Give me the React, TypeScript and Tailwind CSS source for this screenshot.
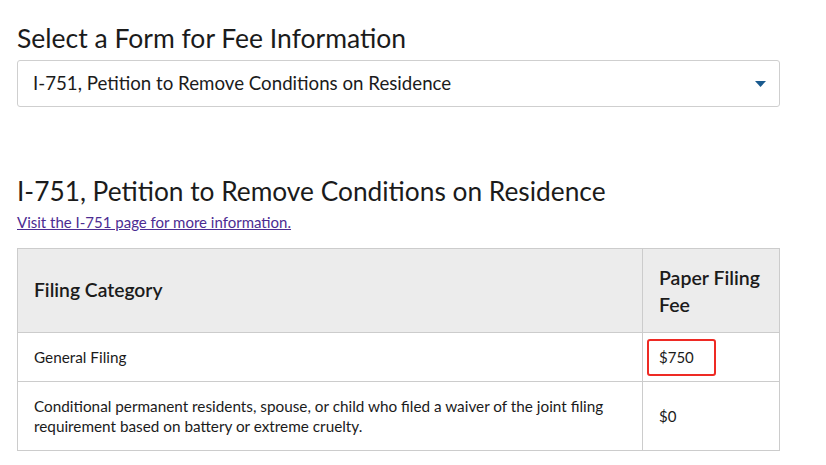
const font = { fontFamily: '"Lato", "Liberation Sans", sans-serif' };

const rows = [
  { category: "General Filing", fee: "$750", highlight: true },
  {
    category:
      "Conditional permanent residents, spouse, or child who filed a waiver of the joint filing requirement based on battery or extreme cruelty.",
    fee: "$0",
    highlight: false,
  },
];

function ChevronDown() {
  return (
    <svg width="11" height="6" viewBox="0 0 11 6" className="shrink-0">
      <path d="M0 0h11L5.5 6z" fill="#1a5b8f" />
    </svg>
  );
}

export default function App() {
  return (
    <div className="min-h-screen bg-white text-[#1b1b1b] pl-[17px] pt-[21px]" style={font}>
      <div className="w-[763px]">
        {/* Form picker */}
        <h2 className="text-[26.5px] leading-[34px] font-normal">Select a Form for Fee Information</h2>
        <div className="mt-[5px] h-[47px] flex items-center justify-between border border-[#cfcfcf] rounded-[3px] pl-[15px] pr-[13px]">
          <span className="text-[18.7px]">I-751, Petition to Remove Conditions on Residence</span>
          <ChevronDown />
        </div>

        {/* Selected form */}
        <h1 className="mt-[67px] text-[26.3px] leading-[34px] font-normal">
          I-751, Petition to Remove Conditions on Residence
        </h1>
        <a href="#" className="block mt-[4px] text-[15px] leading-[20px] text-[#4c2c92] underline">
          Visit the I-751 page for more information.
        </a>

        <table className="mt-[16px] w-full border-collapse border border-[#cccccc]">
          <thead>
            <tr className="bg-[#ececec] h-[84px]">
              <th className="text-left font-semibold text-[19.3px] pl-[16px] border border-[#cccccc] w-[625px]">
                Filing Category
              </th>
              <th className="text-left font-semibold text-[19.5px] leading-[27px] pl-[16px] pr-[10px] border border-[#cccccc]">
                Paper Filing Fee
              </th>
            </tr>
          </thead>
          <tbody>
            {rows.map((row) => (
              <tr key={row.fee} className={row.highlight ? "h-[49px]" : "h-[69px]"}>
                <td className="pl-[16px] pr-[24px] text-[15.3px] leading-[20px] border border-[#cccccc]">
                  {row.category}
                </td>
                <td className="text-[15px] leading-[20px] border border-[#cccccc] pl-[4px]">
                  {row.highlight ? (
                    <span className="inline-block w-[69px] h-[37px] border-2 border-[#ee2a24] rounded-[3px] pl-[10px] leading-[33px]">
                      {row.fee}
                    </span>
                  ) : (
                    <span className="pl-[12px]">{row.fee}</span>
                  )}
                </td>
              </tr>
            ))}
          </tbody>
        </table>
      </div>
    </div>
  );
}
